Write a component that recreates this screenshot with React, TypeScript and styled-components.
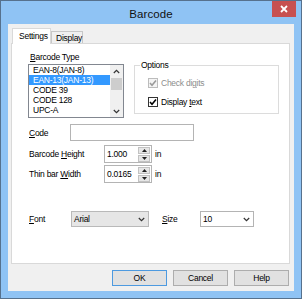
import React from "react";
import styled, { createGlobalStyle } from "styled-components";

const Global = createGlobalStyle`
  html, body { margin: 0; padding: 0; background: #ffffff; }
  body { font-family: "Liberation Sans", Arial, sans-serif; }
  * { box-sizing: border-box; }
`;

const Window = styled.div`
  width: 302px;
  height: 299px;
  border: 1px solid #56718d;
  background: #8fc3f4;
  display: flex;
  flex-direction: column;
  padding: 0 7px 7px 7px;
`;

const TitleBar = styled.div`
  height: 23px;
  margin: 0 -7px;
  display: grid;
  grid-template-columns: 1fr auto 1fr;
  align-items: start;
`;

const Title = styled.div`
  grid-column: 2;
  font-size: 11.5px;
  line-height: 14px;
  margin-top: 6px;
  color: #111;
  letter-spacing: 0.1px;
`;

const CloseButton = styled.div`
  grid-column: 3;
  justify-self: end;
  width: 24px;
  height: 16px;
  margin-right: 5px;
  background: #c75050;
  display: flex;
  align-items: center;
  justify-content: center;
`;

const Client = styled.div`
  flex: 1;
  background: #f0f0f0;
  display: flex;
  flex-direction: column;
  padding: 4px 4px 5px 3px;
  font-size: 8.5px;
  letter-spacing: -0.25px;
  color: #000;
`;

const TabStrip = styled.div`
  display: flex;
  align-items: flex-end;
  padding-left: 1px;
  height: 15px;
  position: relative;
  z-index: 1;
`;

const Tab = styled.div<{ $active?: boolean }>`
  height: ${(p) => (p.$active ? 16 : 12)}px;
  margin-bottom: ${(p) => (p.$active ? -1 : 0)}px;
  padding: ${(p) => (p.$active ? "2px 6px 0 6px" : "1px 4px 0 4px")};
  background: ${(p) => (p.$active ? "#ffffff" : "#f0f0f0")};
  border: 1px solid ${(p) => (p.$active ? "#d9d9d9" : "#c7c7c7")};
  border-bottom: none;
  line-height: 10px;
  width: ${(p) => (p.$active ? 39 : 32)}px;
`;

const Panel = styled.div`
  height: 221px;
  background: #ffffff;
  border: 1px solid #d9d9d9;
  padding: 8px 0 0 16px;
  display: flex;
  flex-direction: column;
`;

const TopSection = styled.div`
  display: flex;
  align-items: flex-start;
  gap: 10px;
`;

const TypeColumn = styled.div`
  display: flex;
  flex-direction: column;
  gap: 2px;
`;

const Caption = styled.div`
  line-height: 10px;
  padding-left: 2px;
`;

const Listbox = styled.div`
  width: 96px;
  height: 54px;
  border: 1px solid #828790;
  display: flex;
  overflow: hidden;
  background: #fff;
`;

const ListItems = styled.div`
  flex: 1;
  display: flex;
  flex-direction: column;
`;

const ListItem = styled.div<{ $selected?: boolean }>`
  height: 10px;
  flex-shrink: 0;
  line-height: 10px;
  padding-left: 4px;
  background: ${(p) => (p.$selected ? "#3399ff" : "transparent")};
  color: ${(p) => (p.$selected ? "#fff" : "#000")};
`;

const ScrollBar = styled.div`
  width: 13px;
  background: #f0f0f0;
  display: flex;
  flex-direction: column;
  align-items: center;
`;

const ScrollArrow = styled.div`
  height: 12px;
  display: flex;
  align-items: center;
  justify-content: center;
`;

const ScrollTrack = styled.div`
  flex: 1;
  width: 100%;
  display: flex;
  flex-direction: column;
`;

const ScrollThumb = styled.div`
  margin-top: 1px;
  height: 12px;
  width: 11px;
  margin-left: 1px;
  background: #cdcdcd;
`;

const Group = styled.div`
  margin-top: 13px;
  width: 145px;
  height: 49px;
  border: 1px solid #dcdcdc;
  position: relative;
  padding: 12px 0 0 13px;
  display: flex;
  flex-direction: column;
  gap: 9px;
`;

const Legend = styled.span`
  position: absolute;
  top: -6px;
  left: 5px;
  padding: 0 1px;
  background: #fff;
  line-height: 10px;
`;

const CheckRow = styled.div<{ $disabled?: boolean }>`
  display: flex;
  align-items: center;
  gap: 3px;
  height: 10px;
  line-height: 10px;
  color: ${(p) => (p.$disabled ? "#8d8d8d" : "#000")};
`;

const CheckBox = styled.div<{ $disabled?: boolean }>`
  width: 10px;
  height: 10px;
  border: 1px solid ${(p) => (p.$disabled ? "#bcbcbc" : "#333")};
  background: ${(p) => (p.$disabled ? "#f4f4f4" : "#fff")};
  display: flex;
  align-items: center;
  justify-content: center;
`;

const U = styled.span`
  text-decoration: underline;
`;

const Row = styled.div<{ $top: number }>`
  display: flex;
  align-items: center;
  margin-top: ${(p) => p.$top}px;
`;

const Label = styled.div<{ $w: number }>`
  width: ${(p) => p.$w}px;
  padding-left: 1px;
  line-height: 10px;
  flex-shrink: 0;
`;

const TextInput = styled.div`
  width: 124px;
  height: 17px;
  border: 1px solid #b4b4b4;
  background: #fff;
`;

const Spin = styled.div`
  width: 48px;
  height: 18px;
  border: 1px solid #b4b4b4;
  background: #fff;
  display: flex;
  align-items: center;
  padding: 0 1px 0 2px;
`;

const SpinValue = styled.div`
  flex: 1;
  line-height: 10px;
`;

const SpinButtons = styled.div`
  width: 12px;
  display: flex;
  flex-direction: column;
  gap: 1px;
`;

const SpinButton = styled.div`
  height: 7px;
  background: #e6e6e6;
  border: 1px solid #c2c2c2;
  display: flex;
  align-items: center;
  justify-content: center;
`;

const Unit = styled.div`
  margin-left: 3px;
  line-height: 10px;
`;

const Combo = styled.div<{ $w: number; $gray?: boolean }>`
  width: ${(p) => p.$w}px;
  height: 16px;
  border: 1px solid ${(p) => (p.$gray ? "#b9b9b9" : "#b4b4b4")};
  background: ${(p) => (p.$gray ? "#e6e6e6" : "#fff")};
  display: flex;
  align-items: center;
  justify-content: space-between;
  padding: 0 3px 0 2px;
  line-height: 10px;
`;

const ButtonBar = styled.div`
  margin-top: 6px;
  display: flex;
  justify-content: flex-end;
  gap: 6px;
  padding-right: 1px;
`;

const Button = styled.div<{ $default?: boolean }>`
  width: 55px;
  height: 16px;
  border: 1px solid ${(p) => (p.$default ? "#4d9ae0" : "#adadad")};
  background: #e1e1e1;
  display: flex;
  align-items: center;
  justify-content: center;
  line-height: 10px;
`;

const Chevron = ({ up, color = "#333" }: { up?: boolean; color?: string }) => (
  <svg width="7" height="5" viewBox="0 0 7 5">
    <path
      d={up ? "M0.8 4 L3.5 1.3 L6.2 4" : "M0.8 1 L3.5 3.7 L6.2 1"}
      fill="none"
      stroke={color}
      strokeWidth="1.2"
    />
  </svg>
);

const Tri = ({ up }: { up?: boolean }) => (
  <svg width="5" height="3" viewBox="0 0 5 3">
    <path d={up ? "M0 3 L2.5 0 L5 3 Z" : "M0 0 L2.5 3 L5 0 Z"} fill="#222" />
  </svg>
);

const Check = ({ color }: { color: string }) => (
  <svg width="8" height="8" viewBox="0 0 8 8">
    <path d="M1 4 L3 6.2 L7 1.5" fill="none" stroke={color} strokeWidth="1.6" />
  </svg>
);

const items = ["EAN-8(JAN-8)", "EAN-13(JAN-13)", "CODE 39", "CODE 128", "UPC-A", "UPC-E"];

export default function App() {
  return (
    <>
      <Global />
      <Window>
        <TitleBar>
          <Title>Barcode</Title>
          <CloseButton>
            <svg width="8" height="8" viewBox="0 0 8 8">
              <path d="M1 1 L7 7 M7 1 L1 7" stroke="#fff" strokeWidth="1.8" />
            </svg>
          </CloseButton>
        </TitleBar>
        <Client>
          <TabStrip>
            <Tab $active>Settings</Tab>
            <Tab>Display</Tab>
          </TabStrip>
          <Panel>
            <TopSection>
              <TypeColumn>
                <Caption>
                  <U>B</U>arcode Type
                </Caption>
                <Listbox>
                  <ListItems>
                    {items.map((it, i) => (
                      <ListItem key={it} $selected={i === 1}>
                        {it}
                      </ListItem>
                    ))}
                  </ListItems>
                  <ScrollBar>
                    <ScrollArrow>
                      <Chevron up />
                    </ScrollArrow>
                    <ScrollTrack>
                      <ScrollThumb />
                    </ScrollTrack>
                    <ScrollArrow>
                      <Chevron />
                    </ScrollArrow>
                  </ScrollBar>
                </Listbox>
              </TypeColumn>
              <Group>
                <Legend>Options</Legend>
                <CheckRow $disabled>
                  <CheckBox $disabled>
                    <Check color="#9a9a9a" />
                  </CheckBox>
                  <span>
                    Check di<U>g</U>its
                  </span>
                </CheckRow>
                <CheckRow>
                  <CheckBox>
                    <Check color="#000" />
                  </CheckBox>
                  <span>
                    Display <U>t</U>ext
                  </span>
                </CheckRow>
              </Group>
            </TopSection>
            <Row $top={6}>
              <Label $w={42}>
                <U>C</U>ode
              </Label>
              <TextInput />
            </Row>
            <Row $top={4}>
              <Label $w={76}>
                Barcode <U>H</U>eight
              </Label>
              <Spin>
                <SpinValue>1.000</SpinValue>
                <SpinButtons>
                  <SpinButton>
                    <Tri up />
                  </SpinButton>
                  <SpinButton>
                    <Tri />
                  </SpinButton>
                </SpinButtons>
              </Spin>
              <Unit>in</Unit>
            </Row>
            <Row $top={2}>
              <Label $w={76}>
                Thin bar <U>W</U>idth
              </Label>
              <Spin>
                <SpinValue>0.0165</SpinValue>
                <SpinButtons>
                  <SpinButton>
                    <Tri up />
                  </SpinButton>
                  <SpinButton>
                    <Tri />
                  </SpinButton>
                </SpinButtons>
              </Spin>
              <Unit>in</Unit>
            </Row>
            <Row $top={28}>
              <Label $w={43}>
                <U>F</U>ont
              </Label>
              <Combo $w={78} $gray>
                <span>Arial</span>
                <Chevron />
              </Combo>
              <Label $w={39} style={{ marginLeft: 12 }}>
                <U>S</U>ize
              </Label>
              <Combo $w={54}>
                <span>10</span>
                <Chevron />
              </Combo>
            </Row>
          </Panel>
          <ButtonBar>
            <Button $default>OK</Button>
            <Button>Cancel</Button>
            <Button>Help</Button>
          </ButtonBar>
        </Client>
      </Window>
    </>
  );
}
